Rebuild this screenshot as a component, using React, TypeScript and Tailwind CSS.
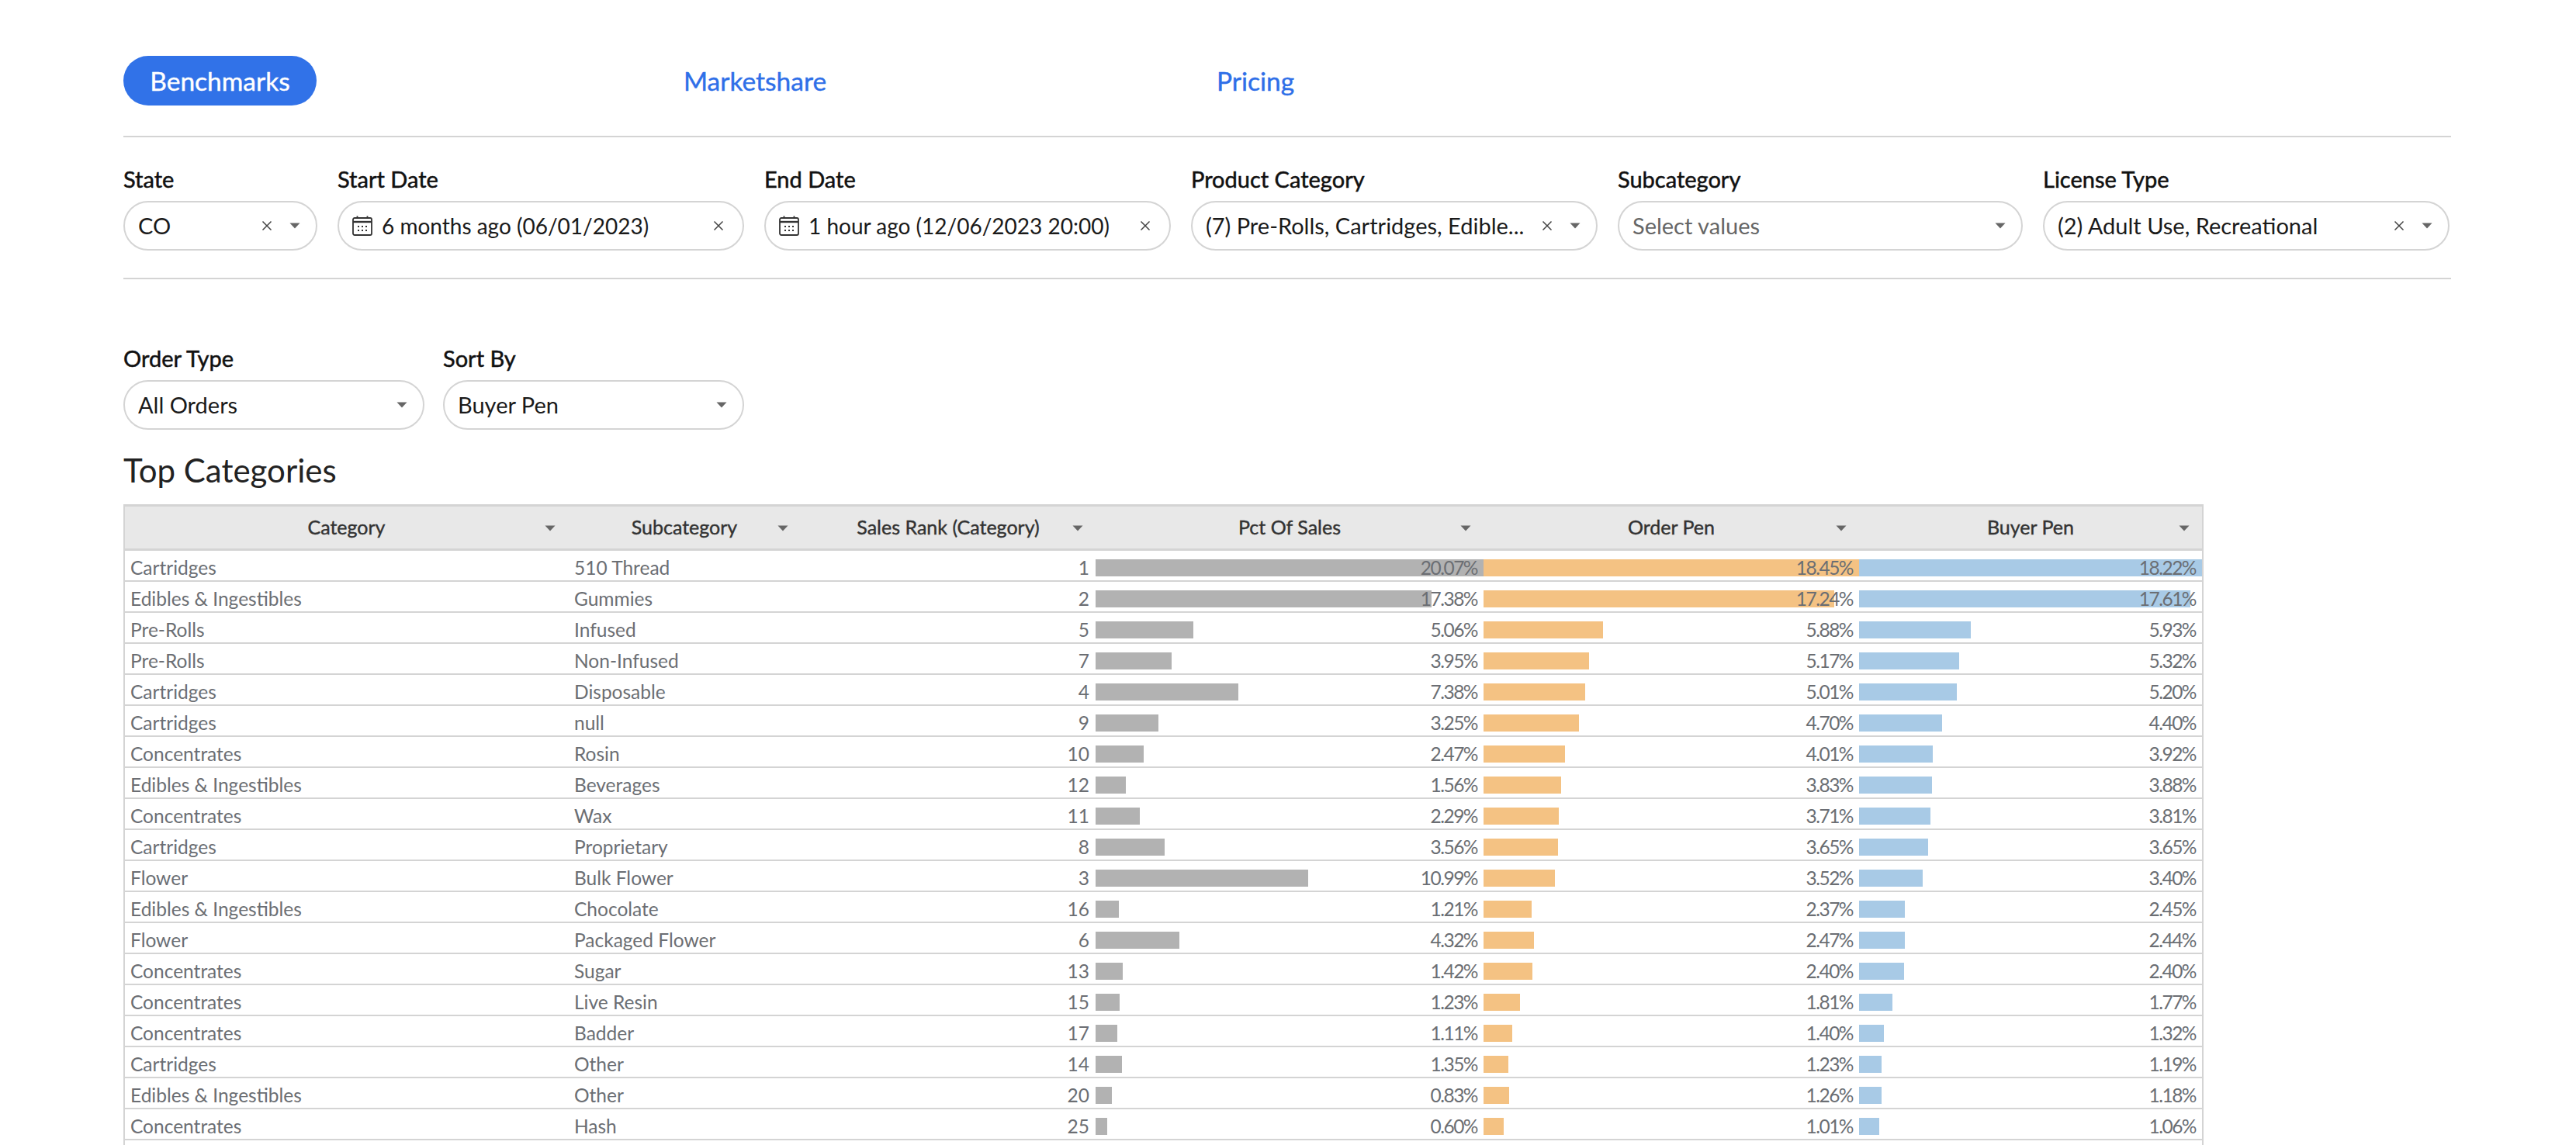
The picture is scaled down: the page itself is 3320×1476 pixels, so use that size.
import { ReactNode } from 'react';

type Row = {
  category: string;
  subcategory: string;
  rank: number;
  sales: number;
  order: number;
  buyer: number;
};

const ROWS: Row[] = [
  { category: 'Cartridges', subcategory: '510 Thread', rank: 1, sales: 20.07, order: 18.45, buyer: 18.22 },
  { category: 'Edibles & Ingestibles', subcategory: 'Gummies', rank: 2, sales: 17.38, order: 17.24, buyer: 17.61 },
  { category: 'Pre-Rolls', subcategory: 'Infused', rank: 5, sales: 5.06, order: 5.88, buyer: 5.93 },
  { category: 'Pre-Rolls', subcategory: 'Non-Infused', rank: 7, sales: 3.95, order: 5.17, buyer: 5.32 },
  { category: 'Cartridges', subcategory: 'Disposable', rank: 4, sales: 7.38, order: 5.01, buyer: 5.2 },
  { category: 'Cartridges', subcategory: 'null', rank: 9, sales: 3.25, order: 4.7, buyer: 4.4 },
  { category: 'Concentrates', subcategory: 'Rosin', rank: 10, sales: 2.47, order: 4.01, buyer: 3.92 },
  { category: 'Edibles & Ingestibles', subcategory: 'Beverages', rank: 12, sales: 1.56, order: 3.83, buyer: 3.88 },
  { category: 'Concentrates', subcategory: 'Wax', rank: 11, sales: 2.29, order: 3.71, buyer: 3.81 },
  { category: 'Cartridges', subcategory: 'Proprietary', rank: 8, sales: 3.56, order: 3.65, buyer: 3.65 },
  { category: 'Flower', subcategory: 'Bulk Flower', rank: 3, sales: 10.99, order: 3.52, buyer: 3.4 },
  { category: 'Edibles & Ingestibles', subcategory: 'Chocolate', rank: 16, sales: 1.21, order: 2.37, buyer: 2.45 },
  { category: 'Flower', subcategory: 'Packaged Flower', rank: 6, sales: 4.32, order: 2.47, buyer: 2.44 },
  { category: 'Concentrates', subcategory: 'Sugar', rank: 13, sales: 1.42, order: 2.4, buyer: 2.4 },
  { category: 'Concentrates', subcategory: 'Live Resin', rank: 15, sales: 1.23, order: 1.81, buyer: 1.77 },
  { category: 'Concentrates', subcategory: 'Badder', rank: 17, sales: 1.11, order: 1.4, buyer: 1.32 },
  { category: 'Cartridges', subcategory: 'Other', rank: 14, sales: 1.35, order: 1.23, buyer: 1.19 },
  { category: 'Edibles & Ingestibles', subcategory: 'Other', rank: 20, sales: 0.83, order: 1.26, buyer: 1.18 },
  { category: 'Concentrates', subcategory: 'Hash', rank: 25, sales: 0.6, order: 1.01, buyer: 1.06 },
];

const GRID = 'grid grid-cols-[571px_300px_380px_500px_484px_442px]';

function Caret({ className = '' }: { className?: string }) {
  return (
    <svg width="14" height="8" viewBox="0 0 14 8" className={className}>
      <path d="M0.5 0.5h13L7 7.5z" fill="#666" />
    </svg>
  );
}

function Clear() {
  return (
    <svg width="14" height="14" viewBox="0 0 14 14" className="shrink-0">
      <path d="M1.5 1.5l11 11M12.5 1.5l-11 11" stroke="#444" strokeWidth="1.5" fill="none" />
    </svg>
  );
}

function CalendarIcon() {
  return (
    <svg width="26" height="26" viewBox="0 0 26 26" className="shrink-0 mr-[12px]" fill="none">
      <rect x="1" y="3" width="24" height="22" rx="2" stroke="#333" strokeWidth="1.8" />
      <path d="M1 8h24" stroke="#333" strokeWidth="2.4" />
      <path d="M6.5 0.5v3M19.5 0.5v3" stroke="#333" strokeWidth="1.8" />
      <path d="M7 14h2M12 14h2M17 14h2M7 19h2M12 19h2M17 19h2" stroke="#333" strokeWidth="2" />
    </svg>
  );
}

function Field({
  label,
  width,
  children,
  clear,
  caret,
  calendar,
}: {
  label: string;
  width: string;
  children: ReactNode;
  clear?: boolean;
  caret?: boolean;
  calendar?: boolean;
}) {
  return (
    <div className={`${width} shrink-0`}>
      <div className="h-[34px] leading-[30px] text-[29px] text-[#111] mb-[9px] [-webkit-text-stroke:0.5px_#111]">
        {label}
      </div>
      <div
        className={`h-[64px] rounded-[32px] border-2 border-[#d4d4d4] flex items-center pl-[17px] text-[#1a1a1a] ${
          caret ? 'pr-[20px]' : 'pr-[24px]'
        } ${calendar ? 'text-[28px]' : 'text-[29px]'}`}
      >
        {calendar && <CalendarIcon />}
        <span className="flex-1 min-w-0 whitespace-nowrap overflow-hidden">{children}</span>
        {clear && <Clear />}
        {caret && <Caret className={clear ? 'ml-[22px]' : ''} />}
      </div>
    </div>
  );
}

function HeadCell({ label }: { label: string }) {
  return (
    <div className="relative flex items-center justify-center text-[25px] text-[#333] [-webkit-text-stroke:0.4px_#333]">
      {label}
      <Caret className="absolute right-[16px] top-[24px]" />
    </div>
  );
}

function BarCell({ value, max, color }: { value: number; max: number; color: string }) {
  return (
    <div className="relative h-full flex items-start justify-end pr-[8px]">
      <div className={`absolute left-0 top-[11px] h-[22px] ${color}`} style={{ width: `${(value / max) * 100}%` }} />
      <span className="relative tracking-[-1.5px]">{value.toFixed(2)}%</span>
    </div>
  );
}

export default function App() {
  return (
    <div className="h-screen overflow-hidden bg-white pl-[159px] pr-[161px] pt-[72px] font-['Lato','Liberation_Sans',sans-serif]">
      <div className="grid grid-cols-[687px_687px_auto] pb-[39px] border-b-2 border-[#d4d4d4] text-[33.5px] [-webkit-text-stroke:0.4px]">
        <div className="w-[249px] h-[64px] rounded-[32px] bg-[#3172e8] text-white flex items-center justify-center">
          Benchmarks
        </div>
        <div className="h-[64px] pl-[35px] text-[#2f6fe8] flex items-center">Marketshare</div>
        <div className="h-[64px] pl-[35px] text-[#2f6fe8] flex items-center">Pricing</div>
      </div>

      <div className="flex gap-[26px] pt-[39px] pb-[35px] border-b-2 border-[#d4d4d4]">
        <Field label="State" width="w-[250px]" clear caret>CO</Field>
        <Field label="Start Date" width="w-[524px]" clear calendar>6 months ago (06/01/2023)</Field>
        <Field label="End Date" width="w-[524px]" clear calendar>1 hour ago (12/06/2023 20:00)</Field>
        <Field label="Product Category" width="w-[524px]" clear caret>(7) Pre-Rolls, Cartridges, Edible...</Field>
        <Field label="Subcategory" width="w-[522px]" caret>
          <span className="text-[#666]">Select values</span>
        </Field>
        <Field label="License Type" width="w-[524px]" clear caret>(2) Adult Use, Recreational</Field>
      </div>

      <div className="flex gap-[24px] pt-[87px]">
        <Field label="Order Type" width="w-[388px]" caret>All Orders</Field>
        <Field label="Sort By" width="w-[388px]" caret>Buyer Pen</Field>
      </div>

      <h2 className="mt-[28px] h-[50px] leading-[48px] text-[42px] text-[#222]">Top Categories</h2>

      <div className="mt-[18px] w-[2681px] border-x-2 border-[#d4d4d4]">
        <div className={`${GRID} h-[60px] bg-[#e8e8e8] border-y-[3px] border-[#d4d4d4]`}>
          <HeadCell label="Category" />
          <HeadCell label="Subcategory" />
          <HeadCell label="Sales Rank (Category)" />
          <HeadCell label="Pct Of Sales" />
          <HeadCell label="Order Pen" />
          <HeadCell label="Buyer Pen" />
        </div>
        {ROWS.map((row) => (
          <div
            key={`${row.category}-${row.subcategory}`}
            className={`${GRID} h-[40px] border-b-2 border-[#d4d4d4] text-[24.5px] leading-[44px] text-[#6b6e73]`}
          >
            <div className="pl-[7px]">{row.category}</div>
            <div className="pl-[8px]">{row.subcategory}</div>
            <div className="pr-[8px] text-right">{row.rank}</div>
            <BarCell value={row.sales} max={20.07} color="bg-[#b2b2b2]" />
            <BarCell value={row.order} max={18.45} color="bg-[#f4c283]" />
            <BarCell value={row.buyer} max={18.22} color="bg-[#a8cae6]" />
          </div>
        ))}
        <div className="h-[40px]" />
      </div>
    </div>
  );
}
